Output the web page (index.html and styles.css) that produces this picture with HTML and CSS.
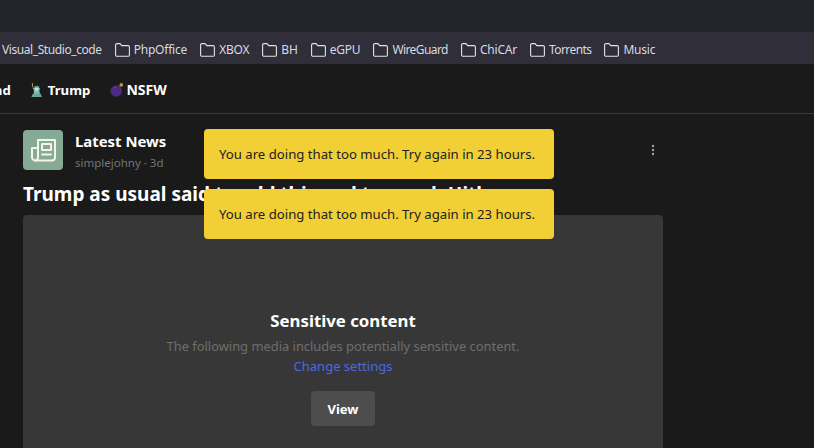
FILE: index.html
```html
<!DOCTYPE html>
<html lang="en">
<head>
<meta charset="utf-8">
<title>Latest News</title>
<link rel="stylesheet" href="styles.css">
</head>
<body>
<svg class="defs" width="0" height="0" aria-hidden="true">
  <symbol id="folder" viewBox="0 0 15 14">
    <path d="M.6 2C.6 1.2 1.2.6 2 .6H5L6.8 2.6H13C13.8 2.6 14.4 3.2 14.4 4V11.9C14.4 12.7 13.8 13.3 13 13.3H2C1.2 13.3.6 12.7.6 11.9Z" fill="none" stroke="currentColor" stroke-width="1.1"/>
  </symbol>
</svg>
<div class="titlebar"></div>
<div class="bookmarks">
  <span class="bm bm-tight">Visual_Studio_code</span>
  <span class="bm"><svg class="folder"><use href="#folder"/></svg>PhpOffice</span>
  <span class="bm"><svg class="folder"><use href="#folder"/></svg>XBOX</span>
  <span class="bm"><svg class="folder"><use href="#folder"/></svg>BH</span>
  <span class="bm"><svg class="folder"><use href="#folder"/></svg>eGPU</span>
  <span class="bm bm-tighter"><svg class="folder"><use href="#folder"/></svg>WireGuard</span>
  <span class="bm"><svg class="folder"><use href="#folder"/></svg>ChiCAr</span>
  <span class="bm bm-tighter"><svg class="folder"><use href="#folder"/></svg>Torrents</span>
  <span class="bm"><svg class="folder"><use href="#folder"/></svg>Music</span>
</div>
<nav class="nav">
  <span class="nav-item nav-cut">Thailand</span>
  <span class="nav-item nav-statue">
    <svg class="emoji" viewBox="0 0 11 14"><path d="M.8 0 1.8 0 2.2 4 1.2 4Z" fill="#b9935a"/><path d="M2 4 3 5.5 4 2.5 5 4 6.2 2 6.8 4 8.4 3 8 5 9.4 5.5 8.4 7 8.8 11H3L2.8 7 1.6 5Z" fill="#7fbfae"/><path d="M4.2 5H7V7.4H4.2Z" fill="#d5ebe3"/><path d="M2 10.5H9.5L11 14H.4Z" fill="#6aa797"/></svg>
    Trump
  </span>
  <span class="nav-item nav-bomb">
    <svg class="emoji emoji-bomb" viewBox="0 0 15 14"><circle cx="6.2" cy="8" r="5.8" fill="#4b2a82"/><path d="M3.5 5.5A3.5 3.5 0 0 1 6 4" stroke="#6c4aa8" stroke-width="1" fill="none"/><path d="M9.6 3.6 11 2.4" stroke="#6b5a55" stroke-width="1.6"/><circle cx="11.3" cy="1.9" r="1.8" fill="#d98a2b"/></svg>
    NSFW
  </span>
</nav>
<main class="post">
  <header class="post-head">
    <div class="avatar">
      <svg viewBox="0 0 25 24" width="25" height="24" fill="none" stroke="#f3f5e6" stroke-width="2" stroke-linejoin="round" stroke-linecap="round">
        <path d="M7 2H24V19C24 21 22.5 22.5 20.5 22.5H4"/>
        <path d="M7 2V19.5C7 21.2 5.7 22.5 4.1 22.5S1 21.2 1 19.5V10H7"/>
        <rect x="11" y="6" width="9" height="6"/>
        <path d="M11 16.5H20"/>
      </svg>
    </div>
    <div class="meta">
      <div class="community">Latest News</div>
      <div class="byline">simplejohny · 3d</div>
    </div>
    <svg class="more" viewBox="0 0 4 12" width="4" height="12"><circle cx="2" cy="2" r="1.2"/><circle cx="2" cy="6" r="1.2"/><circle cx="2" cy="10" r="1.2"/></svg>
  </header>
  <h1 class="title">Trump as usual said to add this and to speak Hitler</h1>
  <section class="media">
    <h2 class="media-title">Sensitive content</h2>
    <p class="media-text">The following media includes potentially sensitive content.</p>
    <a class="media-link">Change settings</a>
    <button class="view">View</button>
  </section>
</main>
<div class="toasts">
  <div class="toast">You are doing that too much. Try again in 23 hours.</div>
  <div class="toast">You are doing that too much. Try again in 23 hours.</div>
</div>
</body>
</html>
```
FILE: styles.css
```css
* { box-sizing: border-box; }
html, body { margin: 0; height: 448px; overflow: hidden; }
body { background: #1a1a1a; color: #fff; font-family: "Noto Sans", "Open Sans", sans-serif; position: relative; }
.defs { position: absolute; }
.titlebar { height: 32px; background: #23232a; }
.bookmarks { height: 32px; background: #2f2e39; display: flex; align-items: center; gap: 13px; padding: 3px 0 0 2px; font-size: 12px; letter-spacing: -.2px; color: #d9dae0; white-space: nowrap; overflow: hidden; }
.bm { display: flex; align-items: center; gap: 4px; }
.bm-tight { letter-spacing: -.42px; }
.bm-tighter { letter-spacing: -.58px; }
.folder { width: 15px; height: 14px; color: #e3e3e8; }
.nav { height: 50px; border-bottom: 1px solid #3a3a3a; display: flex; align-items: center; gap: 20px; padding-top: 2px; font-size: 13.2px; font-weight: 700; overflow: hidden; }
.nav-cut { margin-left: -46px; }
.nav-item { display: flex; align-items: center; gap: 5px; }
.nav-statue { gap: 6px; }
.nav-bomb { gap: 1px; font-size: 14px; }
.emoji { width: 11px; height: 14px; }
.emoji-bomb { width: 15px; }
.post { width: 640px; margin-left: 23px; padding-top: 16px; }
.post-head { display: flex; align-items: flex-start; height: 40px; }
.avatar { width: 40px; height: 40px; border-radius: 4px; background: #87aa97; display: flex; align-items: center; justify-content: center; }
.meta { margin-left: 12px; }
.community { font-size: 14.9px; font-weight: 700; line-height: 22px; }
.byline { font-size: 11.5px; line-height: 16px; margin-top: 3px; color: #757575; }
.more { margin-left: auto; margin-top: 14px; margin-right: 8px; fill: #a3a3a3; }
.title { margin: 11px 0 8px; font-size: 19px; font-weight: 700; line-height: 26px; white-space: nowrap; }
.media { height: 300px; background: #373737; border-radius: 4px; display: flex; flex-direction: column; align-items: center; padding-top: 93px; }
.media-title { margin: 0; font-size: 16.8px; font-weight: 700; line-height: 26px; }
.media-text { margin: 2px 0 0; font-size: 12.9px; line-height: 20px; color: #6e6e6e; }
.media-link { font-size: 13px; line-height: 20px; color: #4d68e0; }
.view { margin-top: 15px; width: 64px; height: 35px; border: 0; border-radius: 4px; background: #4d4d4d; color: #fff; font: 700 13px "Noto Sans", sans-serif; }
.toasts { position: absolute; left: 204px; top: 129px; width: 350px; display: flex; flex-direction: column; gap: 10px; }
.toast { height: 50px; background: #f1cf35; color: #212121; border-radius: 4px; font-size: 13.17px; line-height: 50px; padding-left: 15px; white-space: nowrap; }
```
